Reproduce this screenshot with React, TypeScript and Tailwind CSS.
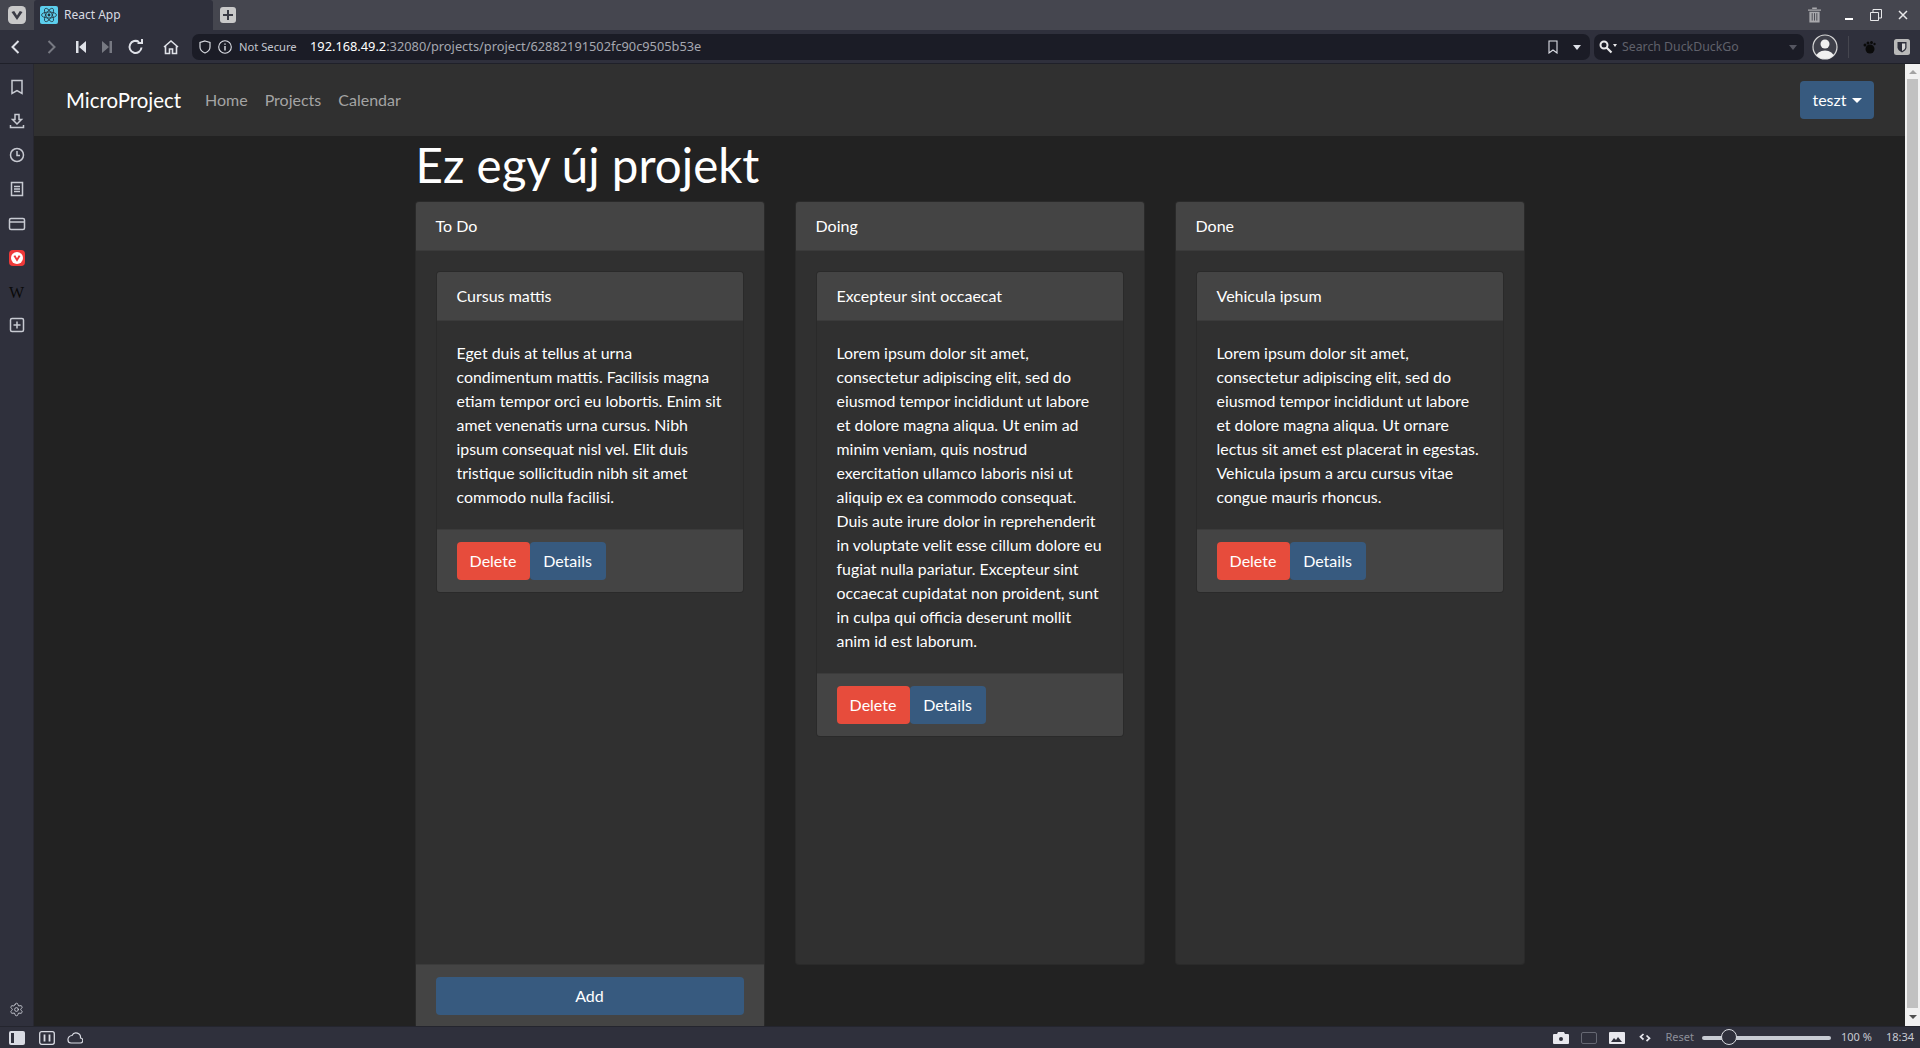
import React from "react";
import { Settings } from "lucide-react";

const S = ({ w = 18, h = 18, vb = "0 0 18 18", className = "", children }: { w?: number; h?: number; vb?: string; className?: string; children: React.ReactNode }) => (
  <svg width={w} height={h} viewBox={vb} fill="none" stroke="currentColor" strokeWidth="1.5" className={"shrink-0 " + className}>{children}</svg>
);

const Btn = ({ kind, children }: { kind: "red" | "blue"; children: React.ReactNode }) => (
  <button className={"h-[38px] rounded-[4px] text-white text-base text-center " + (kind === "red" ? "w-[73px] bg-[#e74c3c]" : "w-[76px] bg-[#375a7f]")}>{children}</button>
);

const Task = ({ title, text }: { title: string; text: string[] }) => (
  <div className="rounded-[4px] bg-[#303030] border border-[rgba(0,0,0,0.125)] overflow-hidden">
    <div className="h-[49px] bg-[#444444] border-b border-[rgba(0,0,0,0.125)] px-5 flex items-center text-white">{title}</div>
    <div className="p-5 text-white text-[15.900px] leading-6">
      {text.map((l) => (<div key={l} className="whitespace-nowrap">{l}</div>))}
    </div>
    <div className="bg-[#444444] border-t border-[rgba(0,0,0,0.125)] px-5 py-3 flex"><Btn kind="red">Delete</Btn><Btn kind="blue">Details</Btn></div>
  </div>
);

const Column = ({ title, children, footer }: { title: string; children: React.ReactNode; footer?: boolean }) => (
  <div className="w-[350px] flex flex-col border border-[rgba(0,0,0,0.125)] rounded-[4px] bg-[#303030] self-start">
    <div className="h-[49px] shrink-0 bg-[#444444] rounded-t-[3px] border-b border-[rgba(0,0,0,0.125)] px-5 flex items-center text-white">{title}</div>
    <div className="h-[713px] p-5">{children}</div>
    {footer ? (
      <div className="bg-[#444444] border-t border-[rgba(0,0,0,0.125)] h-[63px] px-5 pt-3">
        <button className="w-full h-[38px] bg-[#375a7f] rounded-[4px] text-white">Add</button>
      </div>
    ) : null}
  </div>
);

const sideIcons = [
  <S key="a"><path d="M4 2.500h10v13l-5-3-5 3z" /></S>,
  <S key="b"><path d="M7 2.500h4v5h2.500L9 12 4.500 7.500H7zM2.500 13v2.500h13V13" /></S>,
  <S key="c"><circle cx="9" cy="9" r="6.500" /><path d="M9 5v4.500h3" /></S>,
  <S key="d"><path d="M3.500 2.500h11v13h-11zM6 6.500h6M6 9h6M6 11.500h6" /></S>,
  <S key="e" className="translate-y-px"><rect x="1.500" y="3.500" width="15" height="11" rx="1.500" /><path d="M1.500 7h15" /></S>,
  <svg key="f" width="16" height="16" viewBox="0 0 16 16" className="translate-y-px"><rect width="16" height="16" rx="4" fill="#ef3939" /><circle cx="8" cy="8" r="6" fill="#fff" /><path d="M4.500 6 8 11.800 11.500 6 9.700 5.300 8 8.200 6.300 5.300z" fill="#ef3939" /></svg>,
  <span key="g" className="text-[#0a0a0a] text-[16px] translate-y-[2px] font-['Liberation_Serif',serif]">W</span>,
  <S key="h"><rect x="2.500" y="2.500" width="13" height="13" rx="1.500" /><path d="M9 5.500v7M5.500 9h7" /></S>,
];

export default function App() {
  return (
    <div className="w-[1920px] h-[1048px] overflow-hidden flex flex-col bg-[#222222] font-['Lato',sans-serif] text-base">
      {/* tab bar */}
      <div className="h-[30px] bg-[#45464f] flex items-end font-['Noto_Sans',sans-serif] text-[#d9dbe2] shrink-0">
        <div className="w-[34px] h-[30px] flex items-center justify-center">
          <svg width="18" height="18" viewBox="0 0 18 18"><rect width="18" height="18" rx="4.500" fill="#c9c9c9" /><path d="M3.500 6 9 14 14.500 6 11.800 5 9 9.500 6.200 5z" fill="#3a3b45" /></svg>
        </div>
        <div className="w-[179px] h-[30px] bg-[#2f303c] rounded-t-[3px] flex items-center pl-[6px] gap-[6px] text-[12px]">
          <svg width="18" height="18" viewBox="0 0 18 18"><rect width="18" height="18" rx="2" fill="#5ccfee" /><g fill="none" stroke="#24343f" strokeWidth=".8"><ellipse cx="9" cy="9" rx="7.500" ry="3" /><ellipse cx="9" cy="9" rx="7.500" ry="3" transform="rotate(60 9 9)" /><ellipse cx="9" cy="9" rx="7.500" ry="3" transform="rotate(120 9 9)" /></g><circle cx="9" cy="9" r="1.400" fill="#24343f" /></svg>
          <span>React App</span>
        </div>
        <div className="h-[30px] flex items-center pl-[7px]">
          <div className="w-4 h-4 rounded-[3px] bg-[#c9c9c9] flex items-center justify-center">
            <svg width="10" height="10" viewBox="0 0 10 10"><path d="M5 0v10M0 5h10" stroke="#3a3b45" strokeWidth="2" /></svg>
          </div>
        </div>
        <div className="flex-1" />
        <div className="h-[30px] flex items-center text-[#e8e8ea]">
          <svg width="13" height="16" viewBox="0 0 14 16" className="text-[#a9a9ad]" fill="currentColor"><path d="M0 2h14v1.500H0zM4.500 0h5v1.500h-5zM1.500 4.500h11V16h-11z" /><path d="M4.500 6v8M7 6v8M9.500 6v8" stroke="#45464f" /></svg>
          <div className="w-[27px] ml-[14px] flex justify-center"><div className="w-2 h-[2px] bg-white mt-[8px]" /></div>
          <div className="w-[27px] flex justify-center">
            <svg width="12" height="12" viewBox="0 0 12 12" fill="none" stroke="currentColor"><path d="M.5 3.500h8v8h-8zM3 3V.5h8.500V9H9" /></svg>
          </div>
          <div className="w-[27px] mr-[4px] flex justify-center">
            <svg width="10" height="10" viewBox="0 0 10 10" stroke="currentColor" strokeWidth="1.500"><path d="M1 1l8 8M9 1L1 9" /></svg>
          </div>
        </div>
      </div>

      {/* address bar */}
      <div className="h-[34px] pt-px bg-[#2f303c] border-b border-[#1f2029] flex items-center font-['Noto_Sans',sans-serif] text-[#dfe1e8] shrink-0">
        <div className="w-[192px] flex items-center h-full">
          <S className="ml-[7px]"><path d="M11.500 3 5.500 9l6 6" strokeWidth="2" /></S>
          <S className="ml-[17px] text-[#777982]"><path d="M6.500 3l6 6-6 6" strokeWidth="2" /></S>
          <svg width="10" height="12" viewBox="0 0 10 12" className="ml-[16px]" fill="currentColor"><path d="M0 0h2.500v12H0zM10 0v12L3 6z" /></svg>
          <svg width="10" height="12" viewBox="0 0 10 12" className="ml-[16px] text-[#777982]" fill="currentColor"><path d="M10 0H7.500v12H10zM0 0v12l7-6z" /></svg>
          <S className="ml-[15px]"><path d="M14.500 9.500A6 6 0 1 1 12 4M10.500 5h4.500V1" strokeWidth="2" /></S>
          <S className="ml-[17px]"><path d="M2 9l7-6 7 6M3.500 8v7.500h4V11h3v4.500h4V8" strokeWidth="1.600" /></S>
        </div>
        <div className="w-[1398px] h-[26px] rounded-[7px] bg-[#1b1c26] flex items-center">
          <S w={14} h={14} vb="0 0 14 14" className="ml-[6px] text-[#d8dae0]"><path d="M7 1l5 1.500V7c0 3-2.500 5-5 6-2.500-1-5-3-5-6V2.500z" strokeWidth="1.200" /></S>
          <S w={14} h={14} vb="0 0 14 14" className="ml-[6px]"><circle cx="7" cy="7" r="6.300" strokeWidth="1.100" /><path d="M7 6v4.500M7 3.500v1.300" strokeWidth="1.400" /></S>
          <span className="ml-[7px] text-[11.200px] text-[#c4c6ce] w-[71px] whitespace-nowrap">Not Secure</span>
          <span className="text-[12.800px] whitespace-nowrap text-white">192.168.49.2<span className="text-[#a6a8b0]">:32080/projects/project/62882191502fc90c9505b53e</span></span>
          <div className="flex-1" />
          <S w={12} h={14} vb="0 0 12 14" className="mr-[14px]"><path d="M2 1h8v12L6 10l-4 3z" strokeWidth="1.100" /></S>
          <div className="w-0 h-0 mr-[9px] border-x-[4px] border-x-transparent border-t-[5px] border-t-[#dfe1e8]" />
        </div>
        <div className="ml-1 w-[210px] h-[26px] rounded-[7px] bg-[#1b1c26] flex items-center text-[12px]">
          <S w={14} h={14} vb="0 0 14 14" className="ml-[5px] text-[#e8e8ea]"><circle cx="5" cy="5" r="3.500" strokeWidth="2" /><path d="M7.500 7.500 12.500 12.500" strokeWidth="2.200" /></S>
          <div className="w-0 h-0 mb-1 border-x-[2.500px] border-x-transparent border-t-[3px] border-t-[#e8e8ea]" />
          <span className="ml-[5px] text-[#60616b] text-[12.300px] whitespace-nowrap">Search DuckDuckGo</span>
          <div className="flex-1" />
          <div className="w-0 h-0 mr-[7px] border-x-[4px] border-x-transparent border-t-[5px] border-t-[#555661]" />
        </div>
        <div className="w-[116px] flex items-center">
          <svg width="26" height="26" viewBox="0 0 26 26" className="ml-[8px]"><defs><clipPath id="av"><circle cx="13" cy="13" r="12" /></clipPath></defs><circle cx="13" cy="13" r="12" fill="#3f404a" stroke="#d8d8d8" strokeWidth="1.200" /><g clipPath="url(#av)" fill="#f0f0f0"><circle cx="13" cy="10" r="4.500" /><ellipse cx="13" cy="23" rx="9" ry="6.500" /></g></svg>
          <div className="ml-[10px] w-px h-[22px] bg-[#45464f]" />
          <svg width="14" height="14" viewBox="0 0 14 14" className="ml-[13px]" fill="#0a0a0a"><ellipse cx="8" cy="9" rx="4.500" ry="4.500" /><circle cx="3" cy="5" r="1.500" /><circle cx="6" cy="3" r="1.500" /><circle cx="9.500" cy="2.500" r="1.500" /><circle cx="12.500" cy="4" r="1.200" /></svg>
          <svg width="16" height="16" viewBox="0 0 16 16" className="ml-[18px]"><rect width="16" height="16" rx="2.500" fill="#b9b9b9" /><path d="M3.500 3h9v5.500c0 2-2.500 4-4.500 5-2-1-4.500-3-4.500-5z" fill="#2f303c" /><path d="M8 4.500h3.200v4c0 1.300-1.700 2.600-3.200 3.400z" fill="#d6d6d6" /></svg>
        </div>
      </div>

      <div className="flex-1 flex min-h-0">
        {/* sidebar */}
        <div className="w-[34px] bg-[#2f303c] border-r border-[#282831] flex flex-col pt-[6px] text-[#c8cad2] shrink-0">
          {sideIcons.map((ic, i) => (
            <div key={i} className="h-[34px] flex items-center justify-center">{ic}</div>
          ))}
          <div className="flex-1" />
          <div className="h-[34px] flex items-center justify-center text-[#c8cad2]">
            <Settings size={15} strokeWidth={1.5} />
          </div>
        </div>

        {/* page */}
        <div className="flex-1 min-w-0 flex flex-col">
          <nav className="h-[72px] shrink-0 bg-[#303030] flex items-center pl-[32px] pr-[31px]">
            <span className="text-white text-[20.400px] w-[115px] whitespace-nowrap">MicroProject</span>
            <div className="flex ml-[15.500px] text-[#a4a4a4]">
              <span className="px-[8.500px]">Home</span>
              <span className="px-[8.500px]">Projects</span>
              <span className="px-[8.500px]">Calendar</span>
            </div>
            <div className="flex-1" />
            <button className="h-[38px] w-[74px] rounded-[4px] bg-[#375a7f] text-white flex items-center justify-center">
              teszt
              <span className="ml-[5px] w-0 h-0 border-x-[5px] border-x-transparent border-t-[5px] border-t-white" />
            </button>
          </nav>
          <main className="w-[1110px] mx-auto">
            <h1 className="text-[47.500px] leading-[58px] text-white mb-[7px] ml-[1px]">Ez egy új projekt</h1>
            <div className="flex gap-[30px]">
              <Column title="To Do" footer>
                <Task title="Cursus mattis" text={["Eget duis at tellus at urna","condimentum mattis. Facilisis magna","etiam tempor orci eu lobortis. Enim sit","amet venenatis urna cursus. Nibh","ipsum consequat nisl vel. Elit duis","tristique sollicitudin nibh sit amet","commodo nulla facilisi."]} />
              </Column>
              <Column title="Doing">
                <Task title="Excepteur sint occaecat" text={["Lorem ipsum dolor sit amet,","consectetur adipiscing elit, sed do","eiusmod tempor incididunt ut labore","et dolore magna aliqua. Ut enim ad","minim veniam, quis nostrud","exercitation ullamco laboris nisi ut","aliquip ex ea commodo consequat.","Duis aute irure dolor in reprehenderit","in voluptate velit esse cillum dolore eu","fugiat nulla pariatur. Excepteur sint","occaecat cupidatat non proident, sunt","in culpa qui officia deserunt mollit","anim id est laborum."]} />
              </Column>
              <Column title="Done">
                <Task title="Vehicula ipsum" text={["Lorem ipsum dolor sit amet,","consectetur adipiscing elit, sed do","eiusmod tempor incididunt ut labore","et dolore magna aliqua. Ut ornare","lectus sit amet est placerat in egestas.","Vehicula ipsum a arcu cursus vitae","congue mauris rhoncus."]} />
              </Column>
            </div>
          </main>
        </div>

        {/* scrollbar */}
        <div className="w-[15px] bg-[#f1f1f1] flex flex-col items-center shrink-0">
          <div className="h-[15px] flex items-center"><div className="w-0 h-0 border-x-[4px] border-x-transparent border-b-[4px] border-b-[#a3a3a3]" /></div>
          <div className="w-[11px] flex-1 bg-[#c1c1c1]" />
          <div className="h-[18px] flex items-center"><div className="w-0 h-0 border-x-[4px] border-x-transparent border-t-[4px] border-t-[#505050]" /></div>
        </div>
      </div>

      {/* status bar */}
      <div className="h-[22px] shrink-0 bg-[#2f303c] border-t border-[#24252e] flex items-center font-['Noto_Sans',sans-serif] text-[11px] text-[#c8cad2]">
        <svg width="16" height="14" viewBox="0 0 16 14" className="ml-[9px]"><rect width="16" height="14" rx="2" fill="#d9dbe3" /><rect x="2" y="2" width="3" height="10" fill="#2f303c" /></svg>
        <svg width="16" height="14" viewBox="0 0 16 14" className="ml-[14px]" fill="none" stroke="#d9dbe3" strokeWidth="1.300"><rect x=".7" y=".7" width="14.600" height="12.600" rx="2" /><path d="M5.500 3.500v7M10.500 3.500v7" strokeWidth="1.800" /></svg>
        <svg width="16" height="12" viewBox="0 0 16 12" className="ml-[12px]" fill="none" stroke="#d9dbe3" strokeWidth="1.200"><path d="M4 11h9a2.500 2.500 0 0 0 .5-5A4.500 4.500 0 0 0 5 3.500 4 4 0 0 0 1 8c0 2 1.500 3 3 3z" /></svg>
        <div className="flex-1" />
        <svg width="16" height="12" viewBox="0 0 16 12"><path d="M0 3a1 1 0 0 1 1-1h3l1-2h6l1 2h3a1 1 0 0 1 1 1v8a1 1 0 0 1-1 1H1a1 1 0 0 1-1-1z" fill="#e8e8ee" /><circle cx="8" cy="7" r="2" fill="#2f303c" /></svg>
        <div className="ml-[12px] w-4 h-[12px] rounded-[2px] border-[1.500px] border-[#666873]" />
        <svg width="16" height="12" viewBox="0 0 16 12" className="ml-[12px]"><rect width="16" height="12" rx="1" fill="#e8e8ee" /><path d="M2 10l3-4 2 2 2-3 4 5z" fill="#2f303c" /></svg>
        <svg width="12" height="9" viewBox="0 0 12 9" fill="none" stroke="#e8e8ee" strokeWidth="1.700" className="ml-[14px]"><path d="M4.500 1 1.500 3.800l3 2.700M7.500 2.500l3 2.800-3 2.700" /></svg>
        <span className="ml-[15px] text-[#8d8f99]">Reset</span>
        <div className="ml-[8px] w-[129px] h-[4px] rounded-full bg-[#c8ccd4] relative">
          <div className="absolute left-[19px] -top-[7px] w-[16px] h-[16px] rounded-full border border-[#d8dae0] bg-[#2f303c]" />
        </div>
        <span className="ml-[10px] w-[45px] whitespace-nowrap">100 %</span>
        <span className="mr-[6px] w-[28px] whitespace-nowrap">18:34</span>
      </div>
    </div>
  );
}
